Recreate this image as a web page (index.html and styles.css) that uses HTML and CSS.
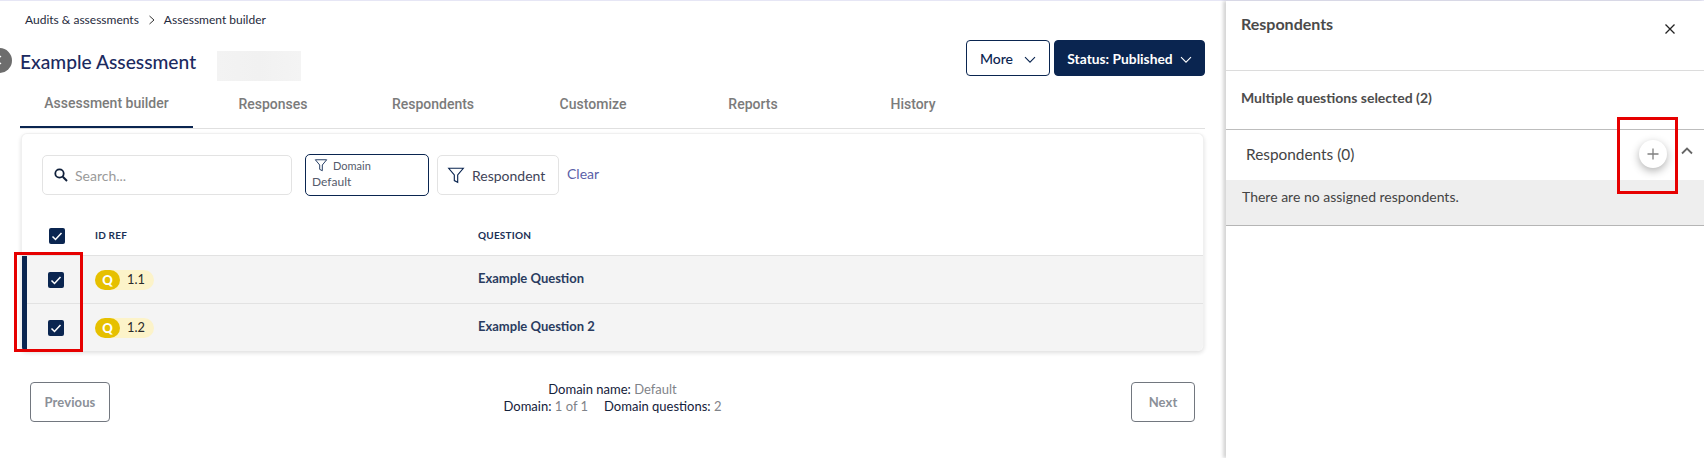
FILE: index.html
```html
<!DOCTYPE html>
<html lang="en">
<head>
<meta charset="utf-8">
<title>Assessment builder</title>
<link rel="stylesheet" href="styles.css">
</head>
<body>
<div class="app">
  <main class="main">
    <nav class="crumbs">
      <span>Audits &amp; assessments</span>
      <svg class="crumb-sep" viewBox="0 0 8 10" width="8" height="10"><path d="M1.5 1l4.5 4-4.5 4" fill="none" stroke="#333" stroke-width="1"/></svg>
      <span>Assessment builder</span>
    </nav>
    <header class="title-row">
      <div class="title-left">
        <span class="back"><svg viewBox="0 0 12 12" width="12" height="12"><path d="M8 2L4 6l4 4" fill="none" stroke="#fff" stroke-width="1.2"/></svg></span>
        <h1 class="title">Example Assessment</h1>
        <div class="blur-box"></div>
      </div>
      <div class="actions">
        <button class="btn btn-more">More <svg class="chev" viewBox="0 0 12 8" width="12" height="8"><path d="M1 1.2l5 5 5-5" fill="none" stroke="#0a2550" stroke-width="1.1"/></svg></button>
        <button class="btn btn-status">Status: Published <svg class="chev" viewBox="0 0 12 8" width="12" height="8"><path d="M1 1.2l5 5 5-5" fill="none" stroke="#fff" stroke-width="1.1"/></svg></button>
      </div>
    </header>
    <div class="tabs">
      <div class="tab tab-active">Assessment builder</div>
      <div class="tab">Responses</div>
      <div class="tab">Respondents</div>
      <div class="tab">Customize</div>
      <div class="tab">Reports</div>
      <div class="tab">History</div>
    </div>
    <section class="card">
      <div class="toolbar">
        <div class="search">
          <svg viewBox="0 0 16 16" width="16" height="16"><circle cx="6.5" cy="6.5" r="4.2" fill="none" stroke="#0f1f3a" stroke-width="1.8"/><path d="M9.8 9.8l4.2 4.2" stroke="#0f1f3a" stroke-width="2"/></svg>
          <span>Search...</span>
        </div>
        <div class="filter filter-domain">
          <div class="filter-top">
            <svg viewBox="0 0 16 16" width="14" height="14"><path d="M1.5 2h13L9.5 8v6.5l-3-1.5V8z" fill="none" stroke="#0a2550" stroke-width="1"/></svg>
            <span>Domain</span>
          </div>
          <div class="filter-value">Default</div>
        </div>
        <div class="filter filter-resp">
          <svg viewBox="0 0 16 16" width="18" height="18"><path d="M1.5 2h13L9.5 8v6.5l-3-1.5V8z" fill="none" stroke="#0a2550" stroke-width="1"/></svg>
          <span>Respondent</span>
        </div>
        <a class="clear">Clear</a>
      </div>
      <div class="thead">
        <span class="check"><svg viewBox="0 0 16 16" width="16" height="16"><path d="M3.5 8.5l3 3 6-6.5" fill="none" stroke="#fff" stroke-width="1.5"/></svg></span>
        <span class="th">ID REF</span>
        <span class="th">QUESTION</span>
      </div>
      <div class="rows">
        <div class="row">
          <span class="check"><svg viewBox="0 0 16 16" width="16" height="16"><path d="M3.5 8.5l3 3 6-6.5" fill="none" stroke="#fff" stroke-width="1.5"/></svg></span>
          <span class="pill"><b class="pill-q">Q</b><span class="pill-n">1.1</span></span>
          <span class="question">Example Question</span>
        </div>
        <div class="row row-next">
          <span class="check"><svg viewBox="0 0 16 16" width="16" height="16"><path d="M3.5 8.5l3 3 6-6.5" fill="none" stroke="#fff" stroke-width="1.5"/></svg></span>
          <span class="pill"><b class="pill-q">Q</b><span class="pill-n">1.2</span></span>
          <span class="question">Example Question 2</span>
        </div>
      </div>
      <div class="mark mark-rows"></div>
    </section>
    <footer class="pager">
      <button class="btn-page btn-prev">Previous</button>
      <div class="pager-info">
        <div>Domain name: <span class="muted">Default</span></div>
        <div>Domain: <span class="muted">1 of 1</span><span class="info-gap"></span>Domain questions: <span class="muted">2</span></div>
      </div>
      <button class="btn-page btn-next">Next</button>
    </footer>
  </main>
  <aside class="panel">
    <div class="panel-head">
      <h2>Respondents</h2>
      <svg class="close" viewBox="0 0 12 12" width="12" height="12"><path d="M1.5 1.5l9 9M10.5 1.5l-9 9" stroke="#222" stroke-width="1.3"/></svg>
    </div>
    <div class="panel-sub">Multiple questions selected (2)</div>
    <div class="acc-head">
      <span>Respondents (0)</span>
      <span class="acc-tools">
        <span class="add"><svg viewBox="0 0 14 14" width="14" height="14"><path d="M7 1.5v11M1.5 7h11" stroke="#808080" stroke-width="1.3"/></svg></span>
        <svg class="acc-chev" viewBox="0 0 12 8" width="12" height="8"><path d="M1 6.5l5-5 5 5" fill="none" stroke="#666" stroke-width="1.8"/></svg>
      </span>
    </div>
    <div class="acc-body">There are no assigned respondents.</div>
    <div class="mark mark-add"></div>
  </aside>
</div>
</body>
</html>
```
FILE: styles.css
```css
* { box-sizing: border-box; }
html, body { margin: 0; padding: 0; height: 100%; overflow: hidden; background: #fff; }
body { font-family: "Lato", "Liberation Sans", sans-serif; color: #1a2b4a; }
h1, h2 { margin: 0; }

.app { display: flex; height: 458px; border-top: 1px solid #e6e6f5; }

.main { width: 1221px; flex: none; padding: 0 16px 0 20px; overflow: hidden; }

.crumbs { height: 37px; margin-bottom: 2px; padding-left: 5px; display: flex; align-items: center; font-size: 12px; color: #1f2a3d; }
.crumb-sep { margin: 0 8px 0 9px; }

.title-row { height: 42px; display: flex; justify-content: space-between; align-items: flex-start; }
.title-left { display: flex; align-items: center; height: 42px; }
.back { width: 25px; height: 25px; border-radius: 50%; background: #6d6d6d; margin-left: -33px; margin-right: 8px; margin-top: -2px; display: flex; align-items: center; justify-content: flex-end; padding-right: 8px; flex: none; }
.back svg { margin-right: -1px; }
.title { font-size: 19.2px; font-weight: 500; color: #1b2a60; line-height: 24px; margin: 2px 0 0 0; }
.blur-box { width: 84px; height: 30px; margin-left: 21px; margin-top: 10px; background: linear-gradient(90deg, #f3f3f3, #f1f1f1 50%, #f4f4f4); }
.actions { display: flex; gap: 4px; }
.btn { height: 36px; border-radius: 4px; font-family: "Lato", sans-serif; font-size: 14px; display: flex; align-items: center; justify-content: center; cursor: pointer; padding: 0; }
.btn-more { width: 84px; background: #fff; border: 1px solid #0a2550; color: #0a2550; font-weight: 500; gap: 11px; }
.btn-status { width: 151px; background: #0a2550; border: 1px solid #0a2550; color: #fff; font-weight: 700; font-size: 13.8px; gap: 7px; }
.chev { margin-top: 3px; }

.tabs { height: 47px; display: flex; border-bottom: 1px solid #e0e0e0; }
.tab { width: 160px; height: 46px; display: flex; align-items: center; justify-content: center; padding-bottom: 2px; font-family: "Roboto", sans-serif; font-size: 14px; font-weight: 500; color: #7b7b7b; }
.tab-active { width: 173px; border-bottom: 2px solid #0a2550; }

.card { position: relative; margin: 4px 1px 0; height: 218px; border: 1px solid #f0f0f0; border-bottom: 0; border-radius: 6px; box-shadow: 0 2px 4px rgba(0,0,0,.13); background: #fff; }

.toolbar { height: 82px; padding: 21px 0 0 20px; display: flex; align-items: flex-start; }
.search { width: 250px; height: 40px; border: 1px solid #e3e3e3; border-radius: 5px; display: flex; align-items: center; padding-left: 10px; gap: 6px; font-size: 14px; color: #9a9a9a; }
.filter { height: 40px; border: 1px solid #e3e3e3; border-radius: 5px; }
.filter-domain { width: 124px; height: 42px; margin: -1px 0 0 13px; border-color: #0a2550; padding: 1px 6px 0; color: #555b6b; }
.filter-top { display: flex; align-items: center; gap: 5px; font-size: 11px; height: 18px; padding-left: 2px; }
.filter-value { font-size: 12px; line-height: 16px; }
.filter-resp { width: 122px; margin-left: 8px; display: flex; align-items: center; gap: 7px; padding-left: 9px; font-size: 14px; color: #3f4458; }
.clear { margin: 10px 0 0 8px; font-size: 14px; line-height: 18px; color: #5a5fa8; }

.thead { height: 40px; display: grid; grid-template-columns: 73px 383px 1fr; align-items: center; border-bottom: 1px solid #e2e2e2; }
.thead .check { margin-left: 27px; }
.th { font-size: 10px; font-weight: 700; color: #1a2f55; letter-spacing: .2px; margin-bottom: 2px; }

.check { width: 16px; height: 16px; background: #0a2550; border-radius: 2px; display: block; }
.check svg { display: block; }

.rows { border-left: 5px solid #0a2550; border-bottom-left-radius: 4px; background: #f4f4f4; border-bottom-right-radius: 6px; }
.row { height: 47px; display: grid; grid-template-columns: 68px 383px 1fr; align-items: center; }
.row-next { height: 48px; border-top: 1px solid #e2e2e2; }
.row .check { margin-left: 21px; }

.pill { display: flex; align-items: center; width: 59px; height: 20px; border-radius: 10px; background: #fcf3c9; }
.pill-q { width: 25px; height: 20px; border-radius: 10px; background: #e6c000; color: #fff; font-size: 13px; font-weight: 900; display: flex; align-items: center; justify-content: center; }
.pill-n { margin: 0 0 1px 7px; font-size: 12.8px; color: #2a2a2a; }
.question { font-size: 13px; font-weight: 700; color: #2a3c60; margin-bottom: 4px; }

.pager { margin-top: 31px; padding: 0 10px; display: flex; justify-content: space-between; align-items: flex-start; }
.btn-page { height: 40px; background: #fff; border: 1px solid #72777f; border-radius: 4px; font-family: "Lato", sans-serif; font-size: 13px; font-weight: 700; letter-spacing: .1px; color: #8b9098; padding: 0; }
.btn-prev { width: 80px; }
.btn-next { width: 64px; }
.pager-info { font-size: 13px; line-height: 17px; color: #14213a; text-align: center; margin-top: -1px; padding-right: 16px; }
.muted { color: #7f8389; }
.info-gap { display: inline-block; width: 16px; }

.panel { position: relative; flex: 1; margin-left: 5px; background: #fff; box-shadow: -3px 0 3px rgba(0,0,0,.16); color: #444; }
.panel-head { height: 70px; padding: 14px 0 0 15px; display: flex; justify-content: space-between; align-items: flex-start; border-bottom: 1px solid #dcdcdc; }
.panel-head h2 { font-size: 16px; font-weight: 700; line-height: 18px; color: #4a4a4a; }
.close { margin: 8px 28px 0 0; }
.panel-sub { height: 59px; padding: 0 15px 6px; display: flex; align-items: center; font-size: 14px; font-weight: 700; color: #4d4d4d; border-bottom: 1px solid #bdbdbd; }
.acc-head { height: 50px; padding: 0 11px 2px 20px; display: flex; align-items: center; justify-content: space-between; font-size: 15.4px; color: #444; }
.acc-tools { display: flex; align-items: center; gap: 14px; }
.add { width: 28px; height: 28px; border-radius: 50%; background: #fff; box-shadow: 0 3px 8px rgba(0,0,0,.3); display: flex; align-items: center; justify-content: center; }
.acc-chev { margin-top: -6px; }
.acc-body { height: 46px; padding: 8px 16px 0; font-size: 14px; line-height: 18px; color: #444; background: #eee; border-bottom: 1px solid #b5b5b5; }

.mark { position: absolute; border: 3px solid #e60000; pointer-events: none; }
.mark-rows { left: -8px; top: 118px; width: 69px; height: 100px; }
.mark-add { left: 391px; top: 116px; width: 61px; height: 77px; }
```
